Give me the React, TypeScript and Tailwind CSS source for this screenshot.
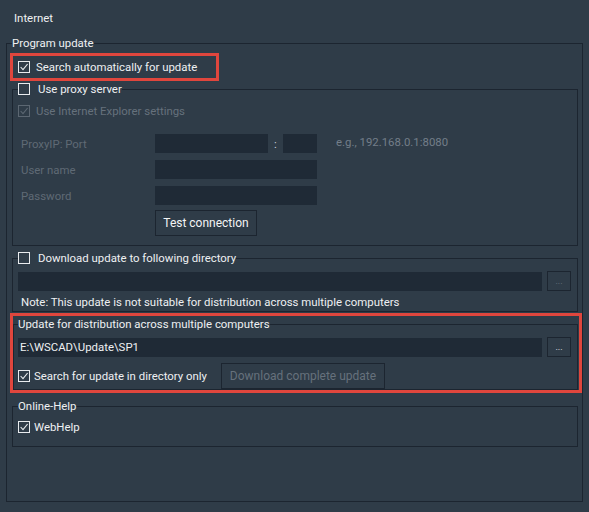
import React from 'react';

const line = 'border-[#1c2530]';

function CheckBox({ checked, disabled }: { checked?: boolean; disabled?: boolean }) {
  const color = disabled ? '#5c6772' : '#e8ebee';
  return (
    <span
      className={`flex h-[12px] w-[12px] shrink-0 items-center justify-center border ${
        disabled ? 'border-[#5c6772]' : 'border-[#e8ebee]'
      }`}
    >
      {checked && (
        <svg viewBox="0 0 10 10" className="h-[10px] w-[10px]" fill="none" stroke={color} strokeWidth={1.1}>
          <path d="M1.6 5 L4 7.6 L8.6 2" />
        </svg>
      )}
    </span>
  );
}

function TextBox({ className = '', children }: { className?: string; children?: React.ReactNode }) {
  return <div className={`flex h-[19px] items-center bg-[#1f2a36] ${className}`}>{children}</div>;
}

function DotsButton({ disabled }: { disabled?: boolean }) {
  return (
    <button
      type="button"
      className={`ml-[5px] flex h-[20px] w-[24px] shrink-0 items-center justify-center border ${line} text-[9px] leading-none ${
        disabled ? 'text-[#6c7680]' : 'text-[#e8ebee]'
      }`}
    >
      ...
    </button>
  );
}

export default function App() {
  return (
    <div className="h-[512px] w-[589px] overflow-hidden bg-[#2f3c48] font-['Roboto','Liberation_Sans',sans-serif] text-[11.4px] leading-[16px] text-[#eef0f2]">
      <div className="pl-[14px] pt-[10px]">Internet</div>

      {/* Program update */}
      <fieldset className={`ml-[6px] mt-[9px] w-[577px] border ${line} pb-[54px] pl-[5px] pr-[4px]`}>
        <legend>Program update</legend>

        <div className="-ml-[2px] mt-[2px] flex h-[28px] w-[209px] items-center gap-[6px] border-[3px] border-[#e0463d] pl-[5px]">
          <CheckBox checked />
          <span>Search automatically for update</span>
        </div>

        {/* Proxy */}
        <fieldset className={`border ${line} pb-[9px] pl-[5px]`}>
          <legend>
            <span className="flex items-center gap-[8px]">
              <CheckBox />
              Use proxy server
            </span>
          </legend>
          <div className="mt-[6px] flex h-[16px] items-center gap-[6px] text-[#66717c]">
            <CheckBox checked disabled />
            Use Internet Explorer settings
          </div>

          <div className="mt-[15px] flex h-[19px] items-center">
            <span className="w-[137px] pl-[3px] text-[#5f6a75]">ProxyIP: Port</span>
            <TextBox className="w-[113px]" />
            <span className="w-[15px] text-center text-[#d0d5da]">:</span>
            <TextBox className="w-[34px]" />
            <span className="ml-[19px] self-start text-[#737e88]">e.g., 192.168.0.1:8080</span>
          </div>
          <div className="mt-[7px] flex items-center">
            <span className="w-[137px] pl-[3px] text-[#5f6a75]">User name</span>
            <TextBox className="w-[162px]" />
          </div>
          <div className="mt-[7px] flex items-center">
            <span className="w-[137px] pl-[3px] text-[#5f6a75]">Password</span>
            <TextBox className="w-[162px]" />
          </div>
          <button
            type="button"
            className={`ml-[137px] mt-[5px] h-[26px] w-[102px] border ${line} text-[12px] text-[#f4f5f6]`}
          >
            Test connection
          </button>
        </fieldset>

        {/* Download directory */}
        <fieldset className={`mt-[4px] border ${line} pb-[1px] pl-[5px] pr-[6px]`}>
          <legend>
            <span className="flex items-center gap-[8px]">
              <CheckBox />
              Download update to following directory
            </span>
          </legend>
          <div className="mt-[5px] flex h-[20px] items-center">
            <TextBox className="flex-1" />
            <DotsButton disabled />
          </div>
          <div className="mt-[3px] pl-[3px]">
            Note: This update is not suitable for distribution across multiple computers
          </div>
        </fieldset>

        {/* Distribution */}
        <div className="-ml-[2px] -mr-[4px] mt-[1px] border-[3px] border-[#e0463d] pr-[1px]">
          <fieldset className={`border ${line} pl-[4px] pr-[6px]`}>
            <legend>Update for distribution across multiple computers</legend>
            <div className="mt-[5px] flex h-[20px] items-center">
              <TextBox className="flex-1 pl-[2px]">E:\WSCAD\Update\SP1</TextBox>
              <DotsButton />
            </div>
            <div className="mt-[6px] flex items-center">
              <label className="flex w-[203px] items-center gap-[4px]">
                <CheckBox checked />
                Search for update in directory only
              </label>
              <button
                type="button"
                disabled
                className={`h-[26px] w-[164px] border ${line} text-[12px] text-[#66717c]`}
              >
                Download complete update
              </button>
            </div>
          </fieldset>
        </div>

        {/* Online help */}
        <fieldset className={`mt-[5px] border ${line} pb-[11px] pl-[5px]`}>
          <legend>Online-Help</legend>
          <div className="mt-[5px] flex h-[16px] items-center gap-[4px]">
            <CheckBox checked />
            WebHelp
          </div>
        </fieldset>
      </fieldset>
    </div>
  );
}
